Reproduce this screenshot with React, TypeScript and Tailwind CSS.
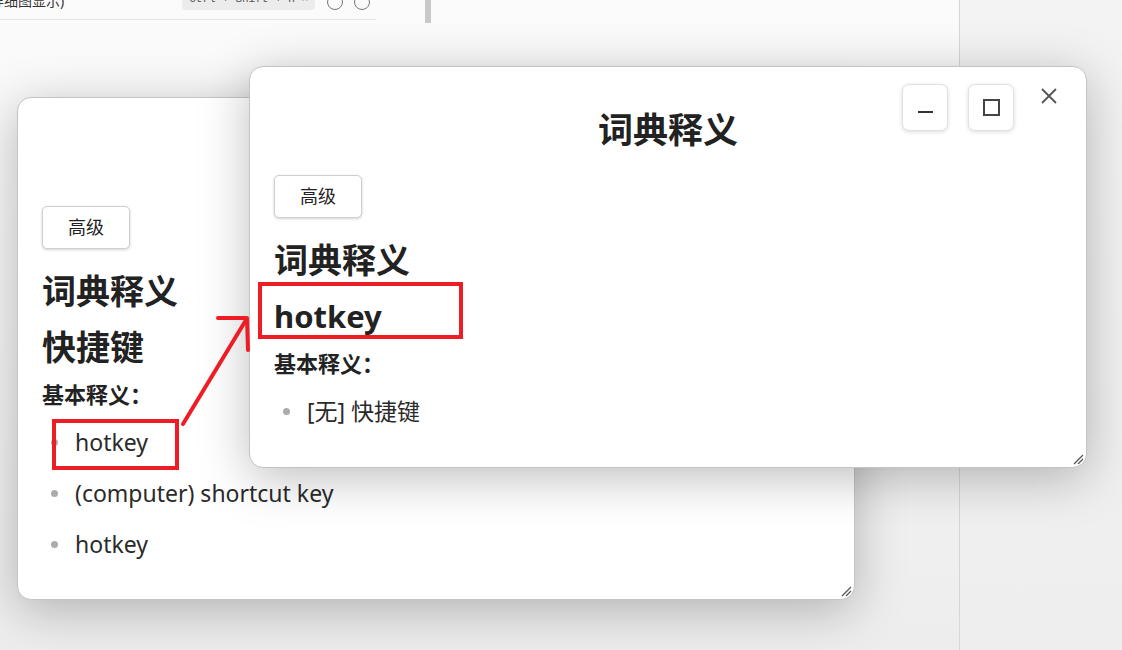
import React from "react";

const FONT = "font-['Noto_Sans','Noto_Sans_CJK_SC',sans-serif]";

function ResizeGrip() {
  return (
    <svg width="12" height="12" viewBox="0 0 12 12" className="absolute right-[2px] bottom-[2px]">
      <line x1="2" y1="11" x2="11" y2="2" stroke="#555" strokeWidth="1.2" />
      <line x1="6" y1="11" x2="11" y2="6" stroke="#555" strokeWidth="1.2" />
    </svg>
  );
}

function AdvancedButton() {
  return (
    <button className="w-[88px] h-[43px] rounded-[5px] border border-[#cfcfcf] bg-white text-[18px] text-[#222] shadow-[0_1px_3px_rgba(0,0,0,0.18)]">
      高级
    </button>
  );
}

function Bullet({ text }: { text: string }) {
  return (
    <li className="flex items-center h-[34px] pl-[9px] gap-[17px] text-[23px] text-[#2a2a2a]">
      <span className="w-[7px] h-[7px] rounded-full bg-[#acacac] shrink-0" />
      <span>{text}</span>
    </li>
  );
}

function DictWindow({
  word,
  latin,
  items,
  controls,
  className,
}: {
  word: string;
  latin?: boolean;
  items: string[];
  controls?: boolean;
  className: string;
}) {
  return (
    <div
      className={`absolute w-[838px] rounded-[14px] bg-white border border-[#c4c4c4] shadow-[0_10px_50px_rgba(0,0,0,0.26)] ${className}`}
    >
      <div className="relative flex flex-col px-[24px]">
        <h1 className="mt-[43px] h-[40px] leading-[40px] text-center text-[35px] font-bold text-[#222]">词典释义</h1>
        {controls && (
          <>
            <div className="absolute top-[17px] right-[72px] flex gap-[20px]">
              <div className="w-[46px] h-[47px] rounded-[7px] border border-[#e2e2e2] bg-white shadow-[0_1px_4px_rgba(0,0,0,0.14)] flex items-center justify-center">
                <div className="w-[15px] h-[2px] bg-[#333] mt-[8px]" />
              </div>
              <div className="w-[46px] h-[47px] rounded-[7px] border border-[#e2e2e2] bg-white shadow-[0_1px_4px_rgba(0,0,0,0.14)] flex items-center justify-center">
                <div className="w-[17px] h-[17px] border-[2px] border-[#444]" />
              </div>
            </div>
            <svg width="18" height="18" viewBox="0 0 18 18" className="absolute top-[20px] right-[28px]">
              <path d="M2 2 L16 16 M16 2 L2 16" stroke="#555" strokeWidth="1.8" />
            </svg>
          </>
        )}
        <div className="mt-[25px]">
          <AdvancedButton />
        </div>
        <h2 className="mt-[20px] h-[44px] leading-[44px] text-[34px] font-bold text-[#222]">词典释义</h2>
        <h3
          className={`mt-[12px] h-[44px] leading-[44px] font-bold text-[#222] ${latin ? "text-[31px]" : "text-[34px]"}`}
        >
          {word}
        </h3>
        <p className="mt-[10px] h-[30px] leading-[30px] text-[22px] font-bold text-[#222]">基本释义：</p>
        <ul className="mt-[16px] flex flex-col gap-[17px] pb-[40px]">
          {items.map((t, i) => (
            <Bullet key={i} text={t} />
          ))}
        </ul>
      </div>
      <ResizeGrip />
    </div>
  );
}

export default function App() {
  return (
    <div className={`relative w-[1122px] h-[650px] overflow-hidden ${FONT}`}>
      {/* background app */}
      <div className="flex h-full">
        <div className="w-[959px] h-full bg-gradient-to-b from-[#fbfbfb] via-[#f4f4f4] to-[#ededed] flex">
          <div className="w-[376px] flex flex-col">
            <div className="h-[20px] border-b border-[#e4e4e4] flex items-end pb-[9px] overflow-hidden">
              <span className="text-[14px] leading-[18px] text-[#333] -ml-[10px] whitespace-nowrap">详细图显示)</span>
              <span className="ml-[118px] h-[20px] px-[7px] shrink-0 rounded-[4px] bg-[#ececec] text-[11px] leading-[18px] text-[#555] font-['Liberation_Mono',monospace] whitespace-nowrap">
                Ctrl + Shift + H ×
              </span>
              <span className="ml-[12px] w-[16px] h-[16px] shrink-0 rounded-full border border-[#777]" />
              <span className="ml-[11px] w-[16px] h-[16px] shrink-0 rounded-full border border-[#777]" />
            </div>
          </div>
          <div className="ml-[49px] w-[6px] h-[23px] bg-[#c9c9c9]" />
        </div>
        <div className="flex-1 h-full border-l border-[#d6d6d6] bg-gradient-to-b from-[#f3f3f3] to-[#eeeeee]" />
      </div>

      {/* back window */}
      <DictWindow
        word="快捷键"
        items={["hotkey", "(computer) shortcut key", "hotkey"]}
        className="left-[17px] top-[97px] h-[503px]"
      />

      {/* front window */}
      <DictWindow
        word="hotkey"
        latin
        items={["[无] 快捷键"]}
        controls
        className="left-[249px] top-[66px] h-[402px]"
      />

      {/* annotations */}
      <svg width="1122" height="650" className="absolute inset-0 pointer-events-none">
        <rect x="54" y="421" width="123" height="47" fill="none" stroke="#ee1c25" strokeWidth="4" />
        <rect x="260" y="284" width="201" height="53" fill="none" stroke="#ee1c25" strokeWidth="4" />
        <path d="M183 424 L246 320" stroke="#ee1c25" strokeWidth="4" strokeLinecap="round" fill="none" />
        <path d="M218 318 L247 318 L248 350" stroke="#ee1c25" strokeWidth="4" strokeLinecap="round" strokeLinejoin="round" fill="none" />
      </svg>
    </div>
  );
}
